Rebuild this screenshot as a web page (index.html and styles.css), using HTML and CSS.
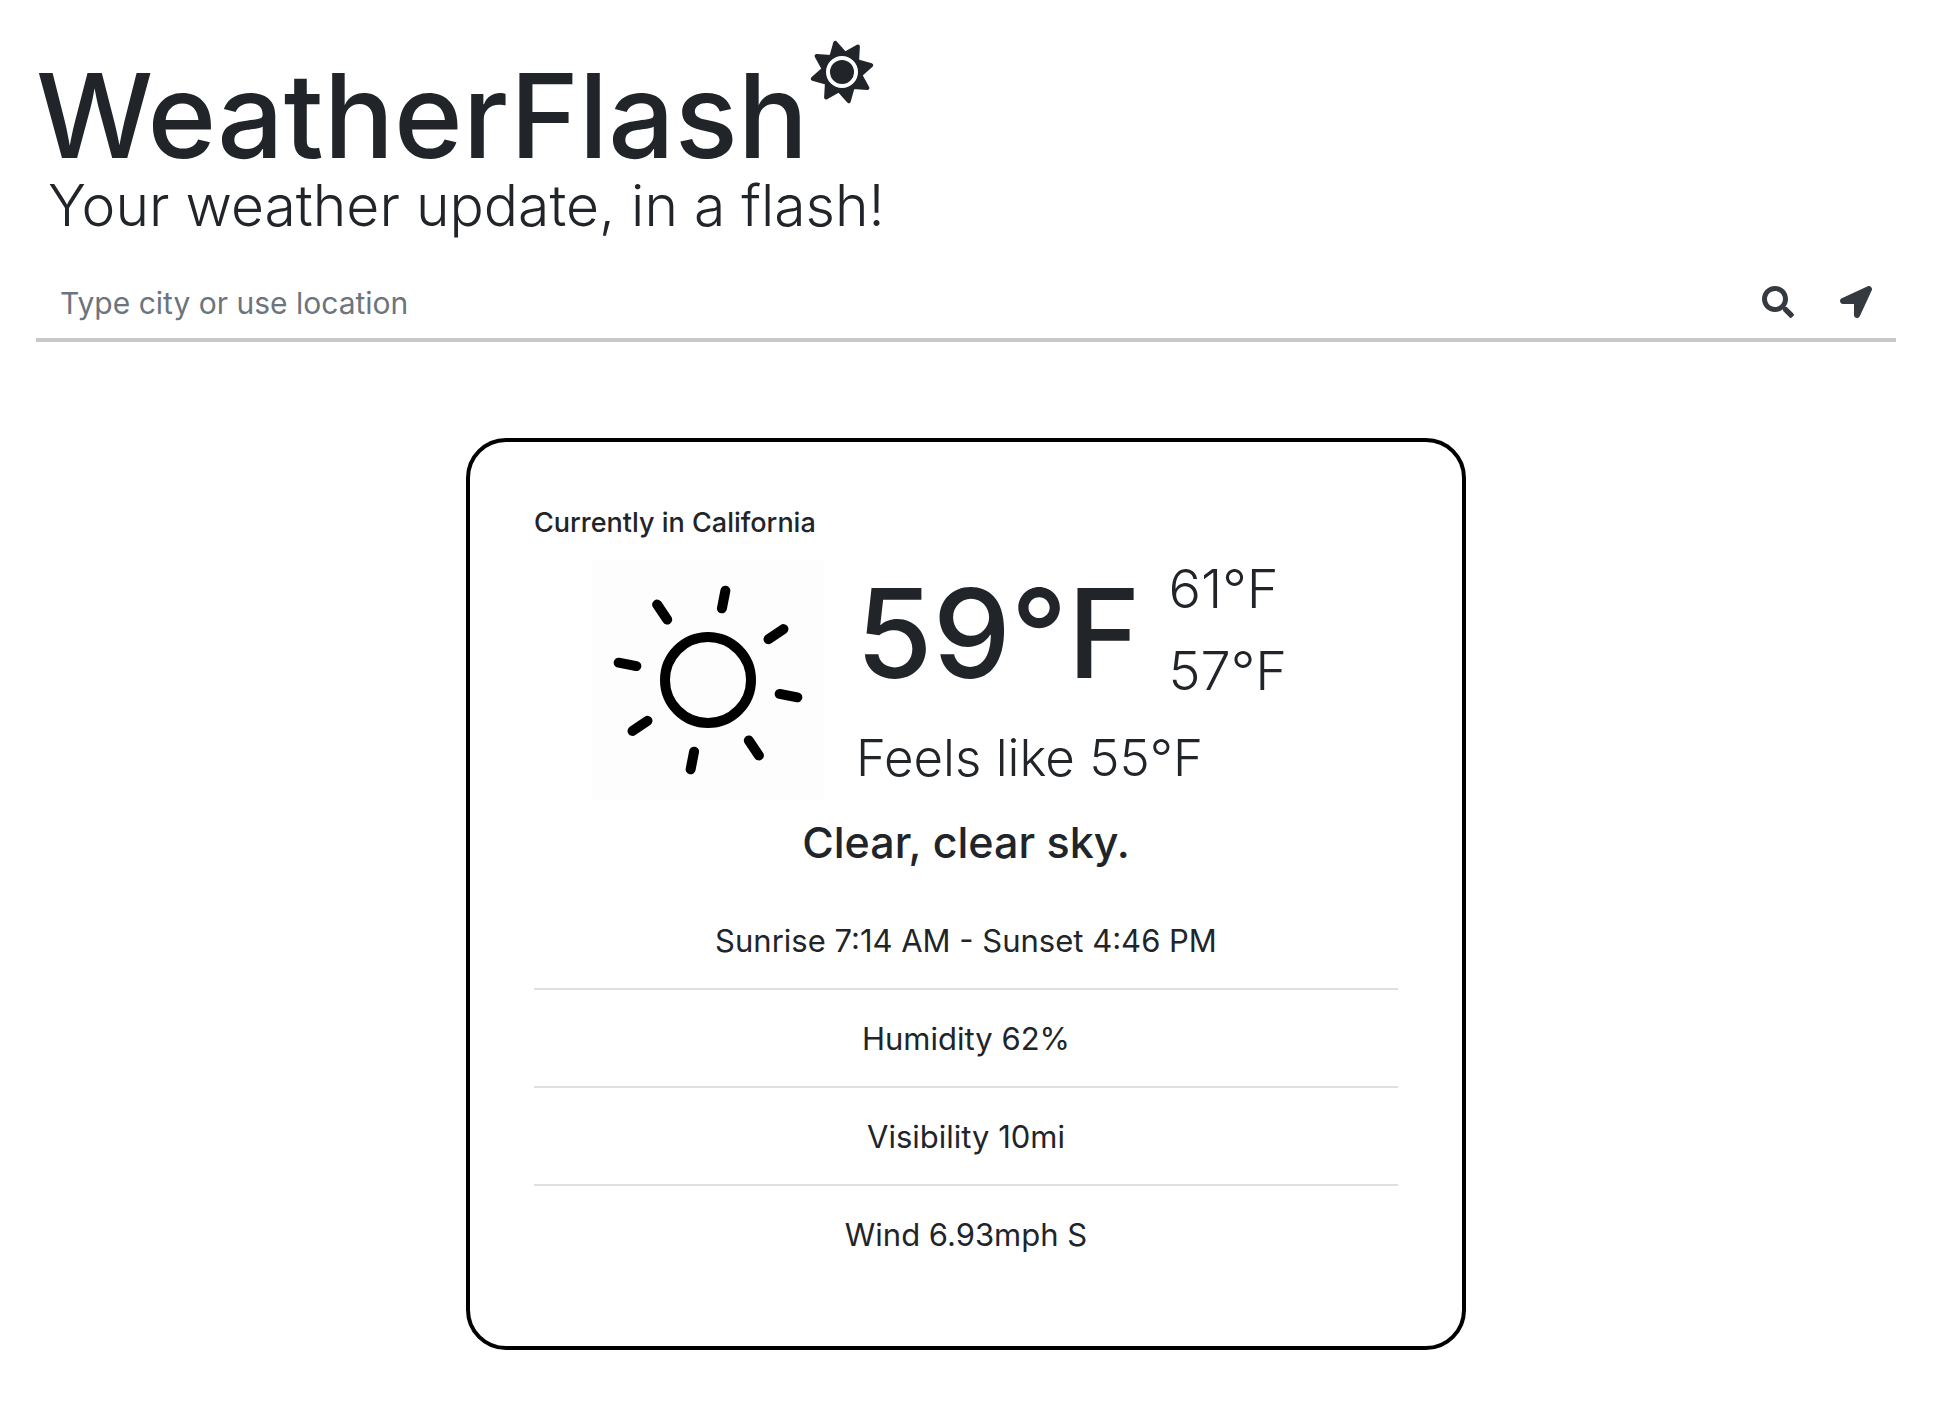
FILE: index.html
```html
<!DOCTYPE html>
<html lang="en">
<head>
<meta charset="utf-8">
<meta name="viewport" content="width=device-width, initial-scale=1">
<title>WeatherFlash</title>
<link rel="stylesheet" href="styles.css">
</head>
<body>
<header class="header">
  <div class="brand">
    <h1 class="brand-name">WeatherFlash</h1>
    <svg class="brand-sun" viewBox="-32 -32 64 64" aria-hidden="true">
      <path transform="rotate(-13)" fill="currentColor" stroke="currentColor" stroke-width="4" stroke-linejoin="round" d="M30 0L17.100 7.100L21.200 21.200L7.100 17.100L0 30L-7.100 17.100L-21.200 21.200L-17.100 7.100L-30 0L-17.100 -7.100L-21.200 -21.200L-7.100 -17.100L0 -30L7.100 -17.100L21.200 -21.200L17.100 -7.100Z"/>
      <circle r="14" fill="none" stroke="#fff" stroke-width="4"/>
    </svg>
  </div>
  <p class="tagline">Your weather update, in a flash!</p>
</header>
<main class="main">
  <form class="search">
    <input class="search-input" type="text" placeholder="Type city or use location" aria-label="City">
    <button class="icon-button" type="submit" aria-label="Search">
      <svg class="icon" viewBox="0 0 512 512" aria-hidden="true"><path fill="currentColor" d="M505 442.700L405.300 343c-4.500-4.500-10.600-7-17-7H372c27.600-35.300 44-79.700 44-128C416 93.100 322.900 0 208 0S0 93.100 0 208s93.100 208 208 208c48.300 0 92.700-16.400 128-44v16.300c0 6.400 2.500 12.500 7 17l99.700 99.700c9.400 9.400 24.600 9.400 33.900 0l28.300-28.300c9.400-9.400 9.400-24.600.1-34zM208 336c-70.700 0-128-57.200-128-128 0-70.700 57.200-128 128-128 70.700 0 128 57.200 128 128 0 70.700-57.200 128-128 128z"/></svg>
    </button>
    <button class="icon-button" type="button" aria-label="Use my location">
      <svg class="icon" viewBox="0 0 512 512" aria-hidden="true"><path fill="currentColor" d="M444.520 3.520L28.740 195.420c-47.970 22.390-31.980 92.750 19.190 92.750h175.910v175.910c0 51.170 70.360 67.170 92.750 19.190l191.900-415.780c15.990-38.390-25.590-79.970-63.970-63.970z"/></svg>
    </button>
  </form>
  <section class="card">
    <h2 class="place">Currently in California</h2>
    <div class="current">
      <svg class="weather-sun" viewBox="-116 -120 232 240" role="img" aria-label="Sunny">
        <circle r="43" fill="none" stroke="#000" stroke-width="10"/>
        <g transform="rotate(11)" stroke="#000" stroke-width="10" stroke-linecap="round">
          <path d="M73 0H91M-73 0H-91M0 73V91M0 -73V-91"/>
          <path transform="rotate(45)" d="M73 0H91M-73 0H-91M0 73V91M0 -73V-91"/>
        </g>
      </svg>
      <div class="readings">
        <div class="temperatures">
          <p class="temperature">59°F</p>
          <div class="range">
            <p class="reading">61°F</p>
            <p class="reading">57°F</p>
          </div>
        </div>
        <p class="reading reading-feels">Feels like 55°F</p>
      </div>
    </div>
    <p class="summary">Clear, clear sky.</p>
    <ul class="details">
      <li class="detail">Sunrise 7:14 AM - Sunset 4:46 PM</li>
      <li class="detail">Humidity 62%</li>
      <li class="detail">Visibility 10mi</li>
      <li class="detail">Wind 6.93mph S</li>
    </ul>
  </section>
</main>
</body>
</html>
```
FILE: styles.css
```css
* {
  box-sizing: border-box;
}

body {
  margin: 0;
  padding: 52px 44px 68px 36px;
  background: #fff;
  color: #212529;
  font-family: Inter, "Liberation Sans", sans-serif;
}

h1, h2, p, ul {
  margin: 0;
  padding: 0;
}

.brand {
  display: flex;
  align-items: flex-start;
  gap: 2px;
}

.brand-name {
  font-size: 117px;
  line-height: 128px;
  font-weight: 500;
}

.brand-sun {
  width: 64px;
  height: 64px;
  margin-top: -12px;
}

.tagline {
  padding-left: 12px;
  font-size: 57px;
  line-height: 52px;
  font-weight: 300;
}

.search {
  display: flex;
  align-items: center;
  margin-top: 34px;
  border-bottom: 4px solid #c8c8c8;
}

.search-input {
  flex: 1;
  min-width: 0;
  height: 72px;
  padding: 2px 24px 0;
  border: 0;
  background: none;
  color: inherit;
  font: inherit;
  font-size: 30px;
}

.search-input::placeholder {
  color: #6c757d;
  opacity: 1;
}

.icon-button {
  display: flex;
  padding: 20px 24px;
  border: 0;
  background: none;
  color: #343a40;
}

.icon-button + .icon-button {
  padding-left: 22px;
}

.icon {
  width: 32px;
  height: 32px;
}

.card {
  max-width: 1000px;
  margin: 96px auto 0;
  padding: 64px;
  border: 4px solid #000;
  border-radius: 40px;
}

.place {
  font-size: 27px;
  line-height: 34px;
  font-weight: 500;
}

.current {
  display: flex;
  align-items: flex-start;
  gap: 32px;
  margin-top: 17px;
  padding-left: 58px;
}

.weather-sun {
  flex: none;
  width: 232px;
  height: 240px;
  margin-top: 3px;
  background: #fdfdfd;
}

.readings {
  display: grid;
  gap: 23px;
}

.temperatures {
  display: flex;
  align-items: center;
  gap: 28px;
}

.temperature {
  padding-top: 6px;
  font-size: 124px;
  line-height: 128px;
  font-weight: 500;
}

.range {
  display: grid;
  gap: 18px;
}

.reading {
  font-size: 54px;
  line-height: 64px;
  font-weight: 300;
}

.reading-feels {
  font-size: 51px;
}

.summary {
  margin-top: 14px;
  font-size: 43px;
  line-height: 56px;
  font-weight: 500;
  text-align: center;
}

.details {
  margin-top: 22px;
  list-style: none;
}

.detail {
  padding-top: 2px;
  font-size: 31px;
  line-height: 94px;
  text-align: center;
}

.detail + .detail {
  border-top: 2px solid #dfdfdf;
}
```
